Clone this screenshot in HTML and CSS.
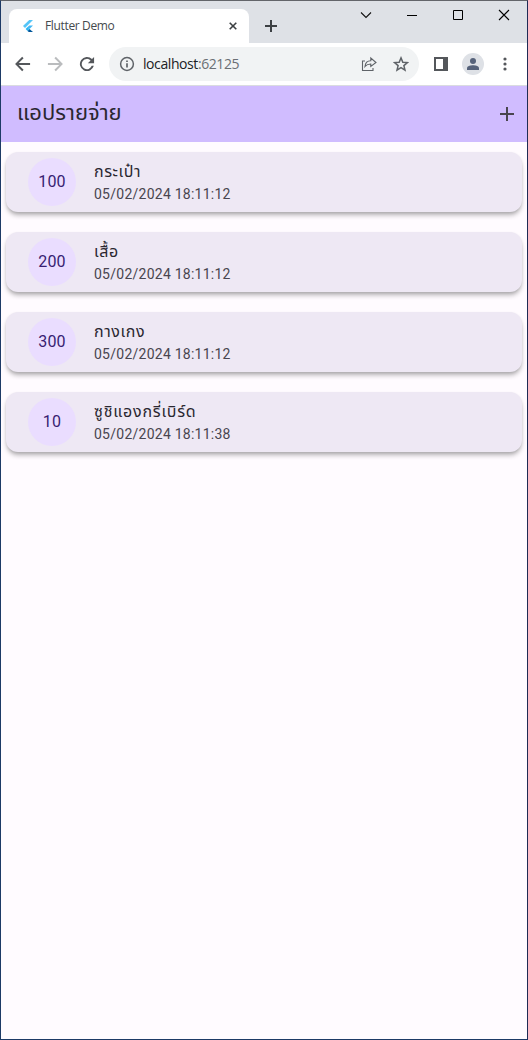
FILE: index.html
```html
<!DOCTYPE html>
<html lang="th">
<head>
<meta charset="utf-8">
<title>Flutter Demo</title>
<link rel="stylesheet" href="styles.css">
</head>
<body>
<div class="window">
  <header class="tabstrip">
    <div class="tab">
      <svg class="favicon" width="16" height="16" viewBox="0 0 16 16"><path fill="#54c5f8" d="M9.2 2H13L5 10 3 8.1z"/><path fill="#42b8f5" d="M9.2 7.5H13L9.5 11 7.4 9.2z"/><path fill="#01579b" d="M7.5 12.9 9.5 11 13 14H8.8z"/><path fill="#29b6f6" d="M5.6 11 7.5 9.1 9.5 11 7.5 12.9z"/></svg>
      <span class="tab-title">Flutter Demo</span>
      <svg class="tab-close" width="8" height="8" viewBox="0 0 8 8"><path d="M.7.7 7.3 7.3M7.3.7.7 7.3" stroke="#3c4043" stroke-width="1.6"/></svg>
    </div>
    <svg class="new-tab" width="12" height="12" viewBox="0 0 12 12"><path d="M6 0v12M0 6h12" stroke="#3c4043" stroke-width="2"/></svg>
    <div class="controls">
      <svg width="12" height="12" viewBox="0 0 12 12"><path d="M1 3.500 6 8.500 11 3.500" fill="none" stroke="#111" stroke-width="1.100"/></svg>
      <svg width="12" height="12" viewBox="0 0 12 12"><path d="M1 6.500h10" stroke="#000"/></svg>
      <svg width="12" height="12" viewBox="0 0 12 12"><path d="M1.500 1.500h9v9h-9z" fill="none" stroke="#000"/></svg>
      <svg width="12" height="12" viewBox="0 0 12 12"><path d="m1 1 10 10M11 1 1 11" stroke="#000" stroke-width="1.100"/></svg>
    </div>
  </header>
  <nav class="toolbar">
    <svg class="nav-icon" width="20" height="20" viewBox="0 0 24 24"><path fill="#54575b" d="M20.500 10.800H6.900l5.800-5.800L11 3.300 2.500 12l8.500 8.700 1.700-1.700-5.800-5.800h13.600z"/></svg>
    <svg class="nav-icon" width="20" height="20" viewBox="0 0 24 24"><path fill="#babcbe" d="M3.500 10.800h13.600L11.300 5 13 3.300 21.500 12 13 20.700 11.300 19l5.800-5.800H3.500z"/></svg>
    <svg class="nav-icon" width="20" height="20" viewBox="0 0 24 24"><path fill="#54575b" d="M18 6A8.500 8.500 0 1 0 20.200 14.200h-2.500A6.200 6.200 0 1 1 16.300 7.700L13 11h7.500V3.500z"/></svg>
    <div class="omnibox">
      <svg class="info" width="16" height="16" viewBox="0 0 16 16"><circle cx="8" cy="8" r="6.400" fill="none" stroke="#5f6368" stroke-width="1.500"/><path d="M8 7.200v4.200M8 4.500V6" stroke="#5f6368" stroke-width="1.700"/></svg>
      <span class="url">localhost<span class="port">:62125</span></span>
      <svg class="share" width="16" height="16" viewBox="0 0 16 16"><g fill="none" stroke="#5f6368" stroke-width="1.100"><path d="M4 5H1.500v9.500H12V12"/><path d="M4 10.500C4.300 7 6.500 4.700 9.800 4.700V2L15 6.500 9.800 10.500V8C7.500 8 5.500 8.600 4 10.500z"/></g></svg>
      <svg class="star" width="16" height="16" viewBox="0 0 16 16"><path d="m8 1.900 1.800 4.300 4.600.4-3.500 3 1.100 4.500-4-2.400-4 2.400 1.100-4.500-3.500-3 4.600-.4z" fill="none" stroke="#5f6368" stroke-width="1.500"/></svg>
    </div>
    <svg class="panel" width="14" height="14" viewBox="0 0 14 14"><path fill="#54575b" fill-rule="evenodd" d="M0 0h14v14H0zM2 2v10h7V2z"/></svg>
    <svg class="avatar" width="22" height="22" viewBox="0 0 22 22"><circle cx="11" cy="11" r="11" fill="#dee1e6"/><circle cx="11" cy="8" r="3" fill="#56627a"/><path d="M5 17v-1.800C5 13 8.500 12.200 11 12.200s6 .8 6 3V17z" fill="#56627a"/></svg>
    <svg class="more" width="4" height="14" viewBox="0 0 4 14"><g fill="#54575b"><circle cx="2" cy="2" r="1.600"/><circle cx="2" cy="7" r="1.600"/><circle cx="2" cy="12" r="1.600"/></g></svg>
  </nav>
  <main class="app">
    <div class="appbar">
      <h1 class="app-title">แอปรายจ่าย</h1>
      <svg width="14" height="14" viewBox="0 0 14 14"><path d="M7 0v14M0 7h14" stroke="#49454f" stroke-width="2"/></svg>
    </div>
    <ul class="list">
      <li class="card"><div class="amount">100</div><div class="details"><div class="name">กระเป๋า</div><div class="date">05/02/2024 18:11:12</div></div></li>
      <li class="card"><div class="amount">200</div><div class="details"><div class="name">เสื้อ</div><div class="date">05/02/2024 18:11:12</div></div></li>
      <li class="card"><div class="amount">300</div><div class="details"><div class="name">กางเกง</div><div class="date">05/02/2024 18:11:12</div></div></li>
      <li class="card"><div class="amount">10</div><div class="details"><div class="name long">ซูชิแองกรี่เบิร์ด</div><div class="date">05/02/2024 18:11:38</div></div></li>
    </ul>
  </main>
</div>
</body>
</html>
```
FILE: styles.css
```css
* { box-sizing: border-box; }
body { margin: 0; }
svg { display: block; flex: none; }
.window {
  width: 528px;
  height: 1040px;
  border: 1px solid #1d3a66;
  border-top-color: #63656a;
  border-right-color: #1f2b55;
  background: #fffbff;
  display: flex;
  flex-direction: column;
  font-family: "Open Sans", "Noto Sans", sans-serif;
}
.tabstrip {
  height: 42px;
  background: #dee1e6;
  display: flex;
  align-items: flex-end;
  padding-left: 8px;
}
.tab {
  width: 240px;
  height: 34px;
  background: #fff;
  border-radius: 8px 8px 0 0;
  display: flex;
  align-items: center;
  padding: 0 12px 0 11px;
}
.tab-title {
  margin-left: 9px;
  flex: 1;
  font-size: 12px;
  line-height: 16px;
  color: #45494d;
  letter-spacing: -0.35px;
}
.new-tab { margin: 0 0 11px 16px; }
.controls {
  display: flex;
  align-self: flex-start;
  gap: 34px;
  margin: 8px 17px 0 auto;
}
.toolbar {
  height: 43px;
  background: #fff;
  border-bottom: 1px solid #dadce0;
  display: flex;
  align-items: center;
  padding: 0 20px 0 12px;
}
.nav-icon { margin-right: 12px; }
.omnibox {
  width: 310px;
  height: 34px;
  border-radius: 17px;
  background: #f1f3f4;
  display: flex;
  align-items: center;
  padding: 0 10px;
}
.url {
  margin-left: 8px;
  flex: 1;
  font-size: 14px;
  line-height: 20px;
  padding-bottom: 1px;
  color: #202124;
  letter-spacing: -0.42px;
}
.port { color: #6b6f74; }
.share { margin-right: 16px; }
.panel { margin-left: 15px; }
.avatar { margin-left: 14px; }
.more { margin-left: auto; }
.app { flex: 1; }
.appbar {
  height: 56px;
  background: #d0bcff;
  display: flex;
  align-items: center;
  justify-content: space-between;
  padding: 0 13px 0 16px;
}
.app-title {
  margin: 0;
  font: 400 22px/28px "Noto Sans Thai", "Noto Sans", sans-serif;
  color: #2a2730;
}
.list {
  list-style: none;
  margin: 0;
  padding: 10px 5px;
  display: flex;
  flex-direction: column;
  gap: 20px;
}
.card {
  height: 60px;
  border-radius: 12px;
  background: #eee8f4;
  box-shadow: 0 4px 5px -1px rgba(0,0,0,.3), 0 1px 3px rgba(0,0,0,.08);
  display: flex;
  align-items: center;
  padding-left: 22px;
}
.amount {
  width: 48px;
  height: 48px;
  border-radius: 50%;
  background: #eaddff;
  color: #381e72;
  display: flex;
  align-items: center;
  justify-content: center;
  font: 16px/24px Roboto, sans-serif;
  letter-spacing: 0.15px;
}
.details { margin-left: 18px; }
.name {
  height: 24px;
  font: 16px/24px "Noto Sans Thai", "Noto Sans", sans-serif;
  letter-spacing: 0.6px;
  color: #2a2730;
}
.long { letter-spacing: 0.8px; }
.date {
  font: 14px/20px Roboto, sans-serif;
  letter-spacing: 0.25px;
  color: #49454f;
}
```
